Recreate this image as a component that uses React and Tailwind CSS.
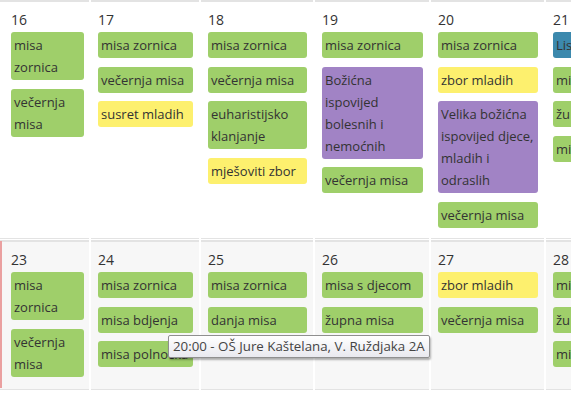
import React from "react";

const C = {
  g: "bg-[#9fcf6a]",
  y: "bg-[#fdf06e]",
  p: "bg-[#a183c5]",
  b: "bg-[#3c89ad]",
};

const row1 = [
  { d: "16", ev: [["g", "misa zornica"], ["g", "večernja misa"]] },
  { d: "17", ev: [["g", "misa zornica"], ["g", "večernja misa"], ["y", "susret mladih"]] },
  { d: "18", ev: [["g", "misa zornica"], ["g", "večernja misa"], ["g", "euharistijsko klanjanje"], ["y", "mješoviti zbor"]] },
  { d: "19", ev: [["g", "misa zornica"], ["p", "Božićna ispovijed bolesnih i nemoćnih"], ["g", "večernja misa"]] },
  { d: "20", ev: [["g", "misa zornica"], ["y", "zbor mladih"], ["p", "Velika božićna ispovijed djece, mladih i odraslih"], ["g", "večernja misa"]] },
  { d: "21", ev: [["b", "Lis"], ["g", "mi"], ["g", "žu"], ["g", "mi"]] },
];

const row2 = [
  { d: "23", ev: [["g", "misa zornica"], ["g", "večernja misa"]] },
  { d: "24", ev: [["g", "misa zornica"], ["g", "misa bdjenja"], ["g", "misa polnoćka", true]] },
  { d: "25", ev: [["g", "misa zornica"], ["g", "danja misa"]] },
  { d: "26", ev: [["g", "misa s djecom"], ["g", "župna misa"]] },
  { d: "27", ev: [["y", "zbor mladih"], ["g", "večernja misa"]] },
  { d: "28", ev: [["g", "mi"], ["g", "žu"], ["g", "mi"]] },
];

function Cell({ day, events, first, second }) {
  return (
    <div
      className={
        "flex flex-col pt-[8px] border-t-2 border-b border-[#e3e3e3] overflow-hidden " +
        (first ? "pl-[11px] pr-[5px] " : "pl-[7px] pr-[6px] ") +
        (second ? "bg-[#f7f7f7] " : "bg-white ")
      }
    >
      <div className="text-[14px] leading-[20px] text-[#333] mb-[2px]">{day}</div>
      <div className="flex flex-col gap-[8.5px]">
        {events.map(([c, t, nw], i) => (
          <div
            key={i}
            className={
              C[c] +
              " rounded-[3px] pl-[3px] pr-[2px] py-[2px] text-[13px] leading-[22px] text-[#333] " +
              (nw ? "whitespace-nowrap overflow-hidden" : "")
            }
          >
            {t}
          </div>
        ))}
      </div>
    </div>
  );
}

export default function App() {
  const cols = "grid w-[660px] grid-cols-[89px_108px_112px_114px_113px_114px] gap-x-[2px]";
  return (
    <div
      className="relative w-[571px] h-[400px] bg-white overflow-hidden"
      style={{ fontFamily: '"Open Sans", sans-serif' }}
    >
      <div className={cols + " h-[239px]"}>
        {row1.map((c, i) => (
          <Cell key={i} day={c.d} events={c.ev} first={i === 0} />
        ))}
      </div>
      <div className={cols + " h-[150px] mt-[1px]"}>
        {row2.map((c, i) => (
          <Cell key={i} day={c.d} events={c.ev} first={i === 0} second />
        ))}
      </div>
      <div className="absolute left-0 top-[241px] w-[2px] h-[147px] bg-[#eaa0a0]" />
      <div className="absolute left-[168px] top-[335px] h-[23px] px-[4px] flex items-center border border-[#8f8f8f] rounded-[2px] bg-gradient-to-b from-white to-[#e9e9ef] shadow-[1px_2px_2px_rgba(0,0,0,0.3)] text-[13.3px] text-[#444] whitespace-nowrap">
        20:00 - OŠ Jure Kaštelana, V. Ruždjaka 2A
      </div>
    </div>
  );
}
